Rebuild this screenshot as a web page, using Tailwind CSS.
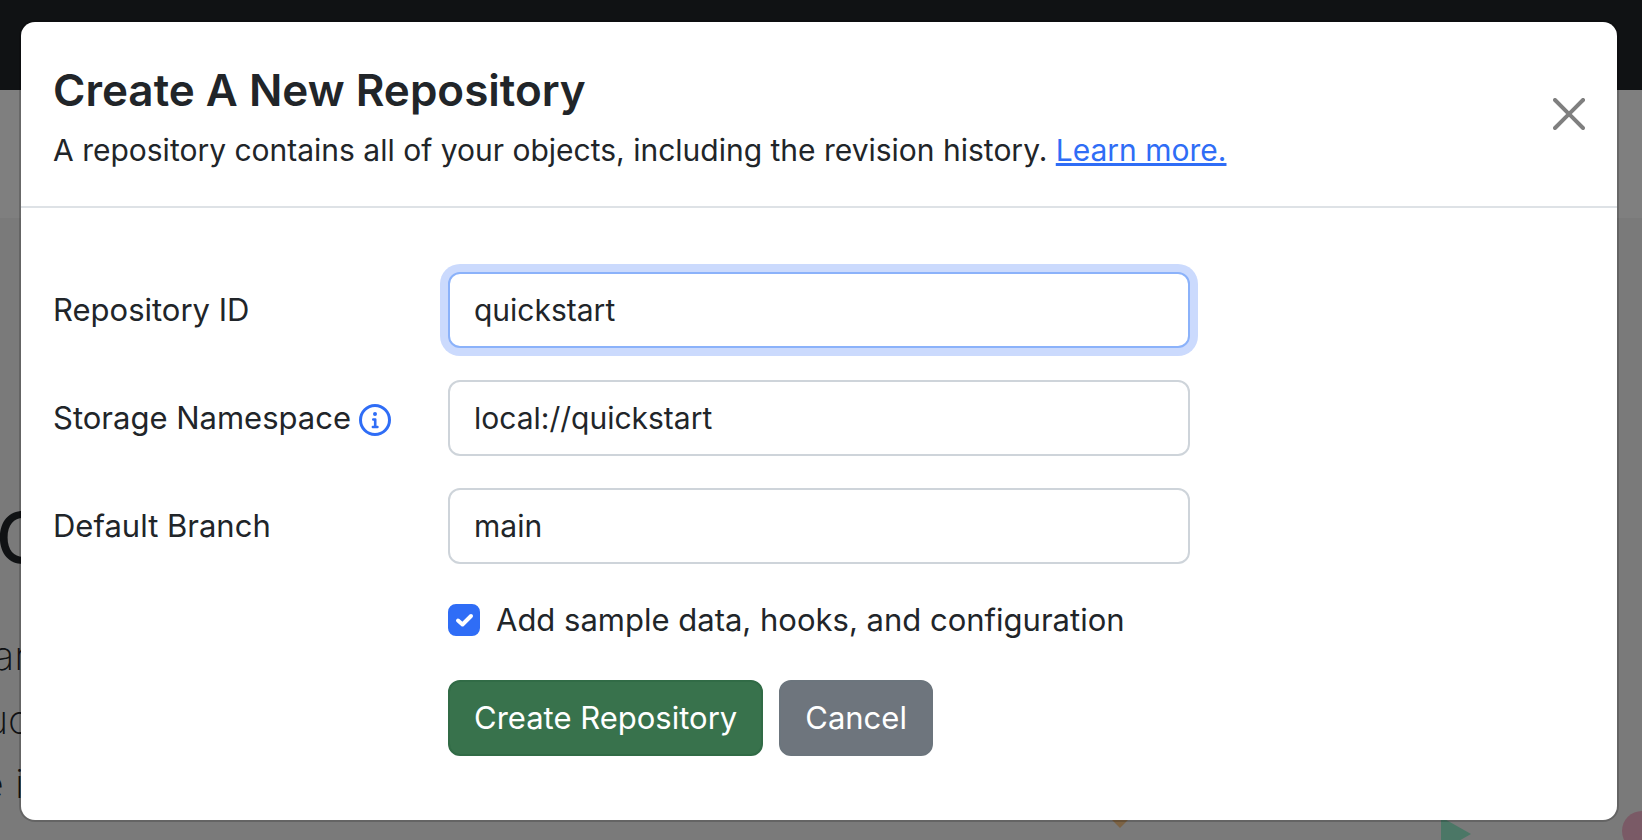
<!DOCTYPE html>
<html lang="en">
<head>
<meta charset="utf-8">
<meta name="viewport" content="width=device-width, initial-scale=1">
<title>Create A New Repository</title>
<script src="https://cdn.jsdelivr.net/npm/@tailwindcss/browser@4"></script>
</head>
<body class="relative min-h-screen overflow-hidden bg-[#f4f4f4] font-['Inter','Liberation_Sans',sans-serif] text-[31px] leading-[48px] text-[#212529]">
  <!-- Page behind the dialog -->
  <div class="absolute inset-0 overflow-hidden" aria-hidden="true">
    <div class="h-[90px] bg-[#212529]"></div>
    <div class="h-32 bg-white"></div>
    <div class="pt-[274px]">
      <div class="-ml-1 text-[70px] leading-[92px] font-medium">C</div>
      <div class="pt-10 text-[40px] leading-[64px] font-extralight">
        <div class="flex w-7 justify-end">ar</div>
        <div class="flex w-[30px] justify-end">uc</div>
        <div class="flex w-6 justify-end whitespace-nowrap">e i</div>
      </div>
    </div>
    <svg class="absolute right-0 bottom-0" width="542" height="40" viewBox="0 0 542 40">
      <path d="M20 12l8 8-8 8-8-8z" fill="#f8c688"/>
      <path d="M341 17l30 17-30 17z" fill="#96eecc"/>
      <circle cx="542" cy="31" r="20" fill="#f4b4cc"/>
    </svg>
  </div>

  <div class="relative min-h-screen bg-black/50 pt-[22px] pr-[25px] pb-5 pl-[21px]">
    <div role="dialog" aria-modal="true" aria-labelledby="title" class="rounded-[14px] bg-white shadow-[0_0_0_2px_rgb(0_0_0/0.175)]">
      <header class="flex items-center justify-between border-b-2 border-[#dee2e6] px-8 pt-10 pb-8">
        <div>
          <h1 id="title" class="mb-2 text-[44px] leading-[56px] font-semibold">Create A New Repository</h1>
          <p class="text-[30px]">A repository contains all of your objects, including the revision history. <a href="#" class="text-[#2f6df6] underline">Learn more.</a></p>
        </div>
        <button type="button" aria-label="Close" class="mt-[-8px] text-black/50">
          <svg width="32" height="32" viewBox="0 0 16 16" fill="currentColor"><path d="M.293.293a1 1 0 0 1 1.414 0L8 6.586 14.293.293a1 1 0 1 1 1.414 1.414L9.414 8l6.293 6.293a1 1 0 0 1-1.414 1.414L8 9.414l-6.293 6.293a1 1 0 0 1-1.414-1.414L6.586 8 .293 1.707a1 1 0 0 1 0-1.414z"/></svg>
        </button>
      </header>
      <form class="grid grid-cols-12 items-center gap-x-12 gap-y-8 px-8 py-16">
        <label for="repo" class="col-span-3">Repository ID</label>
        <input id="repo" type="text" value="quickstart" class="col-span-6 rounded-[12px] border-2 border-[#8bb2fa] bg-white px-6 py-3 text-[30px] ring-8 ring-[#cbdafd] outline-none">
        <div class="col-span-3"></div>
        <div class="col-span-3 flex items-center gap-2 whitespace-nowrap">
          <label for="storage">Storage Namespace</label>
          <svg class="mt-1 shrink-0 text-[#2f6df6]" width="32" height="32" viewBox="0 0 16 16" fill="currentColor"><path d="M0 8a8 8 0 1 1 16 0A8 8 0 0 1 0 8Zm8-6.500a6.500 6.500 0 1 0 0 13 6.500 6.500 0 0 0 0-13ZM6.500 7.750A.600.600 0 0 1 7.100 7.150h1.050a.600.600 0 0 1 .600.600V10.900h.500a.600.600 0 0 1 0 1.200H6.900a.600.600 0 0 1 0-1.200h.550V8.350H7.100a.600.600 0 0 1-.600-.600ZM8 6a1 1 0 1 1 0-2 1 1 0 0 1 0 2Z"/></svg>
        </div>
        <input id="storage" type="text" value="local://quickstart" class="col-span-6 rounded-[12px] border-2 border-[#ced4da] bg-white px-6 py-3 text-[30px] outline-none">
        <div class="col-span-3"></div>
        <label for="branch" class="col-span-3">Default Branch</label>
        <input id="branch" type="text" value="main" class="col-span-6 rounded-[12px] border-2 border-[#ced4da] bg-white px-6 py-3 text-[30px] outline-none">
        <div class="col-span-3"></div>
        <div class="col-span-9 col-start-4 flex items-center gap-4">
          <span class="relative h-8 w-8">
            <input id="sample" type="checkbox" checked class="peer block h-8 w-8 appearance-none rounded-lg border-2 border-[#ced4da] checked:border-[#2f6df6] checked:bg-[#2f6df6]">
            <svg class="pointer-events-none absolute inset-0 hidden peer-checked:block" width="32" height="32" viewBox="0 0 32 32" fill="none" stroke="#fff" stroke-width="4" stroke-linecap="round" stroke-linejoin="round"><path d="M10 16.500l4.500 4L23 12"/></svg>
          </span>
          <label for="sample">Add sample data, hooks, and configuration</label>
        </div>
        <div class="col-span-9 col-start-4 mt-1 flex gap-4">
          <button type="submit" class="rounded-[12px] border-2 border-[#316b46] bg-[#38724c] px-6 py-3 text-white">Create Repository</button>
          <button type="button" class="rounded-[12px] border-2 border-[#6c757d] bg-[#6e757d] px-6 py-3 text-white">Cancel</button>
        </div>
      </form>
    </div>
  </div>
</body>
</html>
